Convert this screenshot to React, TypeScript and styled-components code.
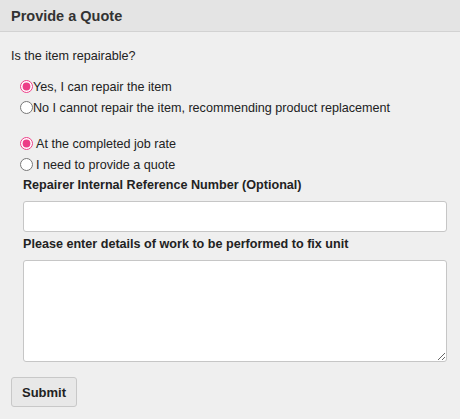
import React from "react";
import styled, { createGlobalStyle } from "styled-components";

const Global = createGlobalStyle`
  html, body { margin: 0; padding: 0; background: #efefef; }
  body { font-family: "Liberation Sans", Arial, sans-serif; color: #222; font-size: 13px; }
`;

const Page = styled.div`
  width: 460px;
  min-height: 419px;
  background: #efefef;
`;

const Header = styled.div`
  height: 31px;
  border-bottom: 1px solid #d2d2d2;
  background: #e4e4e4;
  display: flex;
  align-items: center;
  padding-left: 11px;
`;

const Title = styled.h3`
  margin: 0;
  font-size: 14.5px;
  font-weight: bold;
  color: #333;
`;

const Body = styled.div`
  padding: 15px 11px 0 11px;
  display: flex;
  flex-direction: column;
`;

const Question = styled.p`
  margin: 0 0 11px 0;
  font-size: 12.6px;
  line-height: 18px;
`;

const Group = styled.div<{ $gap: number }>`
  display: flex;
  flex-direction: column;
  padding-left: 9px;
  margin-bottom: ${(p) => p.$gap}px;
`;

const RadioRow = styled.label<{ $space: number }>`
  display: flex;
  align-items: center;
  height: 21px;
  font-size: 12.6px;
  gap: ${(p) => p.$space}px;
  white-space: nowrap;
  cursor: pointer;
`;

const Radio = styled.input.attrs({ type: "radio" })`
  margin: 0;
  width: 13px;
  height: 13px;
  accent-color: #ec3d87;
`;

const Field = styled.div`
  display: flex;
  flex-direction: column;
  padding-left: 12px;
`;

const FieldLabel = styled.label`
  font-weight: bold;
  font-size: 12.6px;
  line-height: 16px;
  margin-bottom: 8px;
`;

const TextInput = styled.input`
  box-sizing: border-box;
  width: 424px;
  height: 31px;
  border: 1px solid #c6c6c6;
  border-radius: 3px;
  background: #fff;
  margin: 0 0 4px 0;
`;

const TextArea = styled.textarea`
  box-sizing: border-box;
  width: 424px;
  height: 102px;
  border: 1px solid #c6c6c6;
  border-radius: 3px;
  background: #fff;
  margin: 0 0 15px 0;
`;

const Button = styled.button`
  align-self: flex-start;
  width: 66px;
  height: 30px;
  border: 1px solid #c8c8c8;
  border-radius: 3px;
  background: #e8e8e8;
  font-family: "Liberation Sans", Arial, sans-serif;
  font-weight: bold;
  font-size: 13px;
  color: #222;
  padding: 0;
`;

export default function App() {
  return (
    <Page>
      <Global />
      <Header>
        <Title>Provide a Quote</Title>
      </Header>
      <Body>
        <Question>Is the item repairable?</Question>
        <Group $gap={15}>
          <RadioRow $space={0}>
            <Radio name="repair" defaultChecked />
            Yes, I can repair the item
          </RadioRow>
          <RadioRow $space={0}>
            <Radio name="repair" />
            No I cannot repair the item, recommending product replacement
          </RadioRow>
        </Group>
        <Group $gap={2}>
          <RadioRow $space={3}>
            <Radio name="rate" defaultChecked />
            At the completed job rate
          </RadioRow>
          <RadioRow $space={3}>
            <Radio name="rate" />
            I need to provide a quote
          </RadioRow>
        </Group>
        <Field>
          <FieldLabel>Repairer Internal Reference Number (Optional)</FieldLabel>
          <TextInput type="text" />
          <FieldLabel>Please enter details of work to be performed to fix unit</FieldLabel>
          <TextArea />
        </Field>
        <Button>Submit</Button>
      </Body>
    </Page>
  );
}
